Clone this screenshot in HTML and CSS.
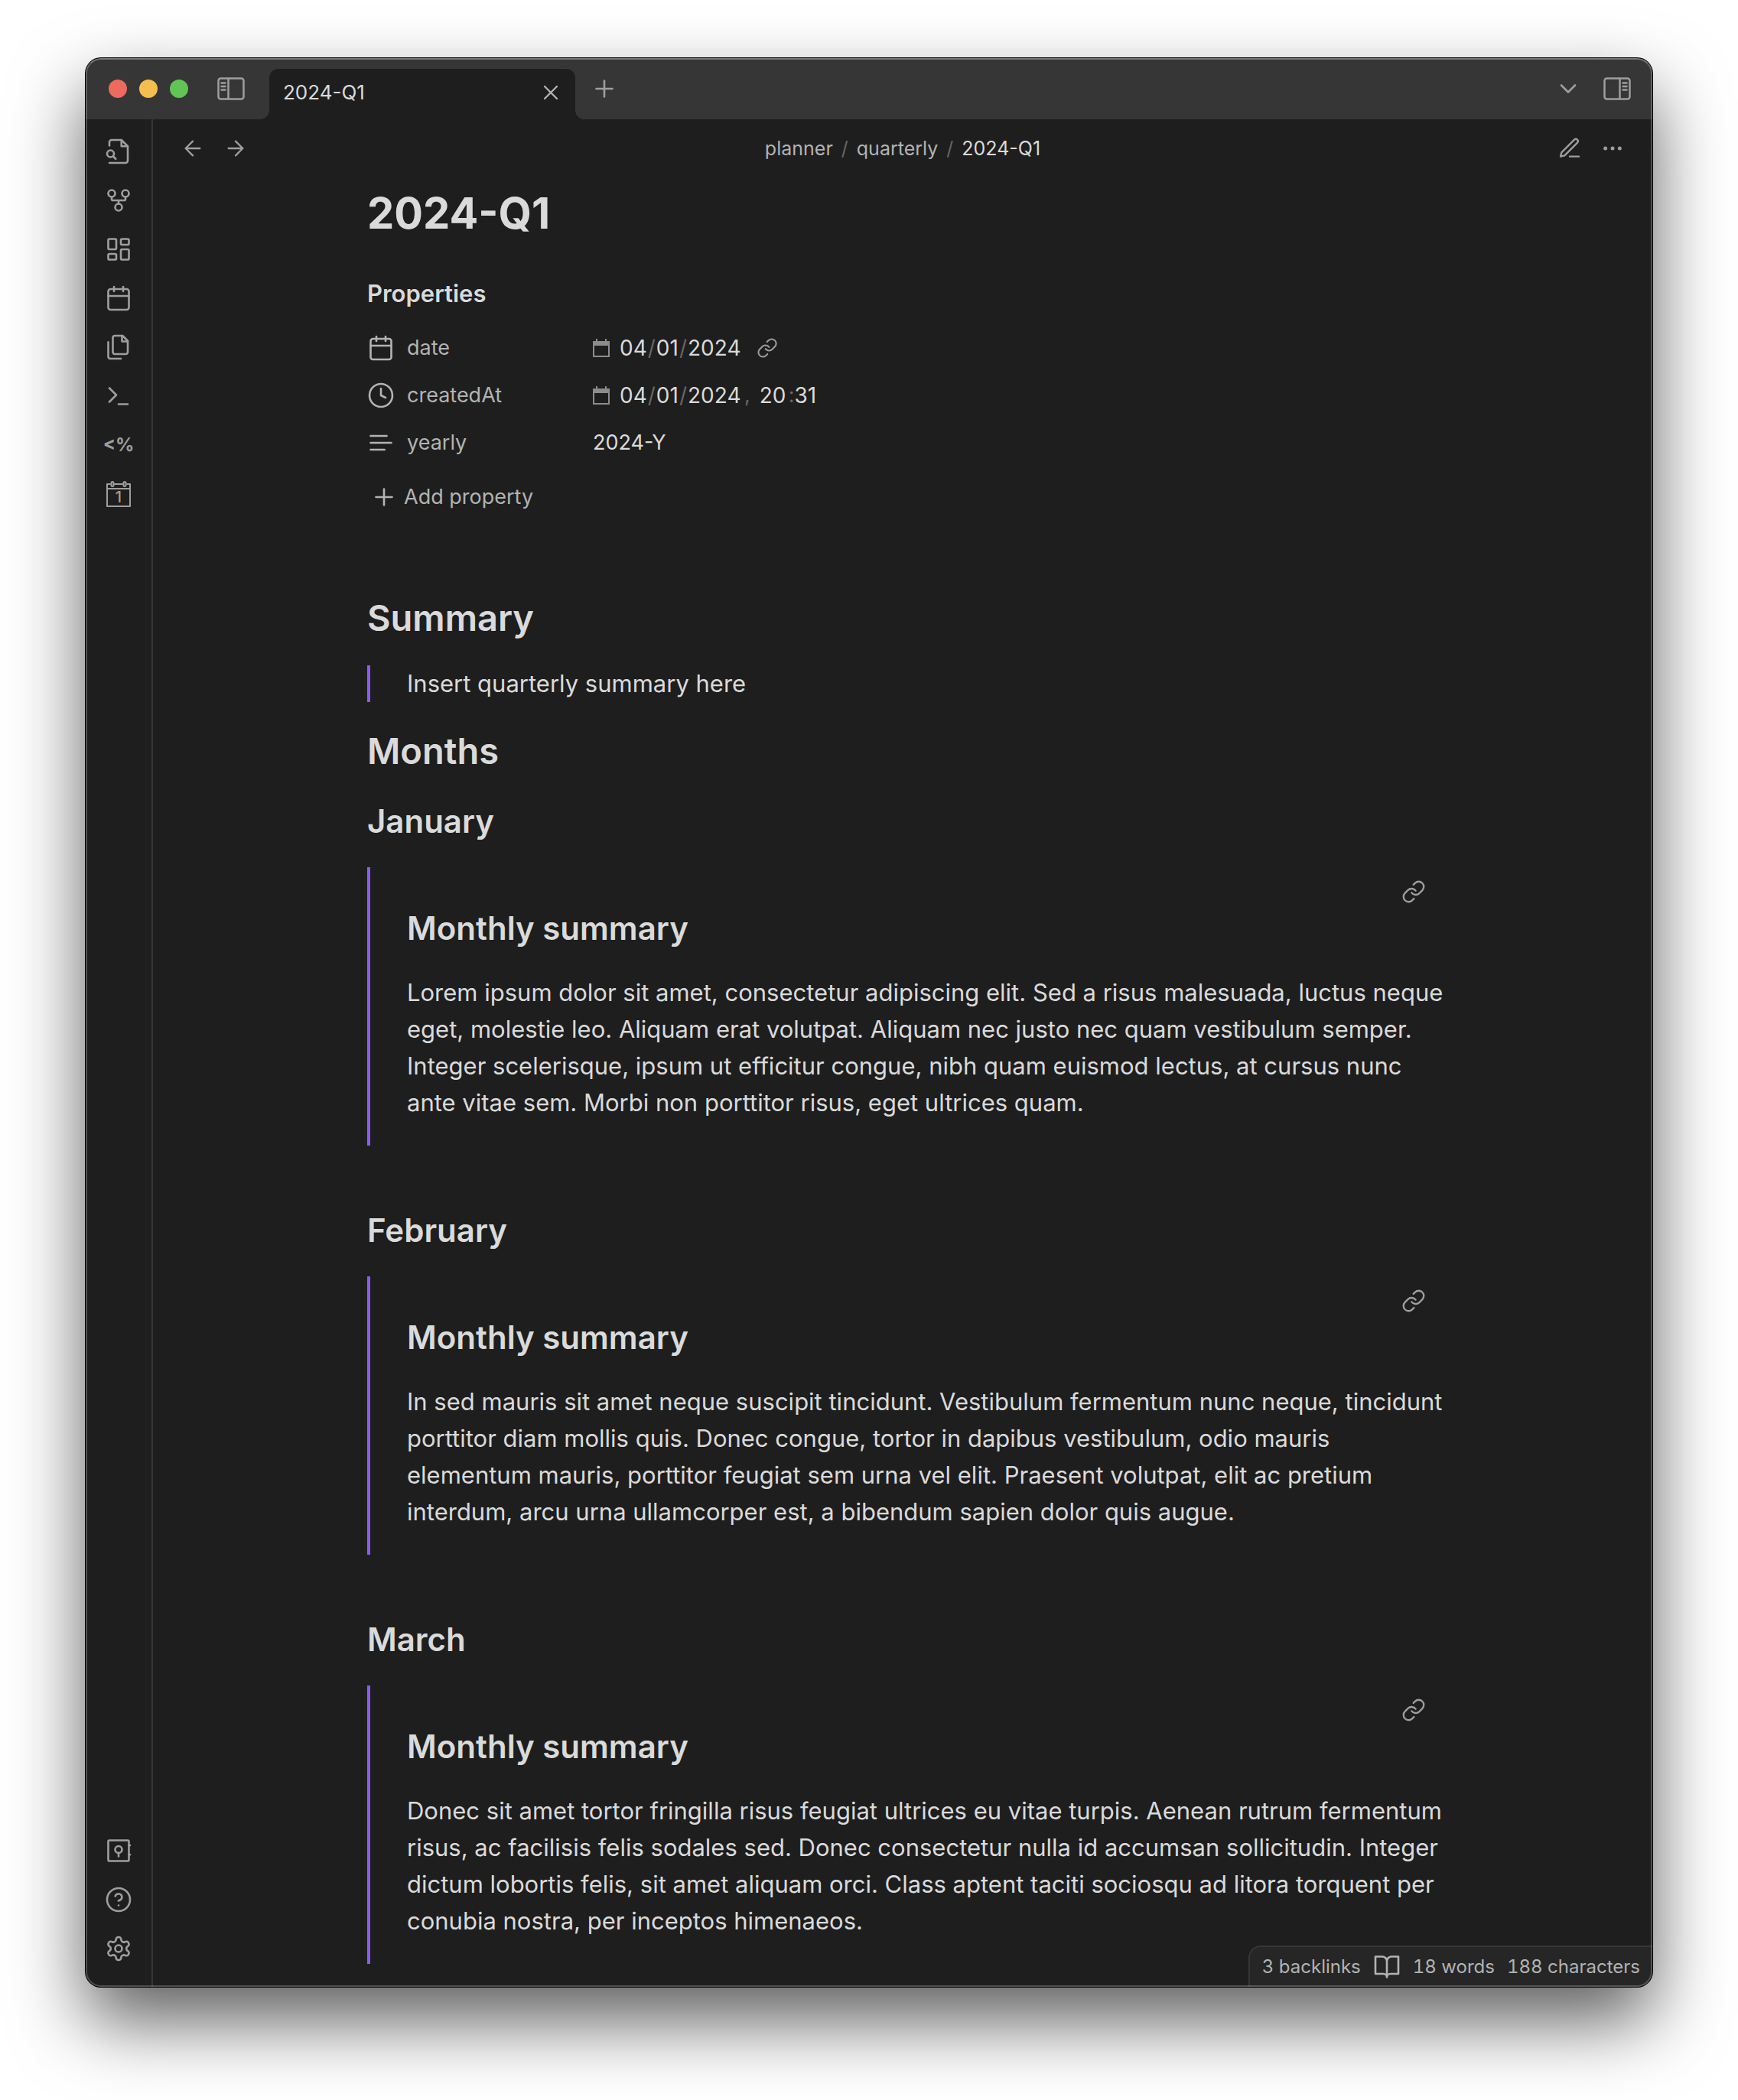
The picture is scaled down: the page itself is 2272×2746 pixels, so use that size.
FILE: index.html
```html
<!DOCTYPE html>
<html lang="en">
<head>
<meta charset="utf-8">
<meta name="viewport" content="width=device-width, initial-scale=1">
<title>2024-Q1</title>
<link rel="stylesheet" href="styles.css">
</head>
<body>
<svg class="sprite" aria-hidden="true">
  <symbol id="link" viewBox="0 0 24 24"><path d="M10 13a5 5 0 0 0 7.54.54l3-3a5 5 0 0 0-7.07-7.07l-1.72 1.71"/><path d="M14 11a5 5 0 0 0-7.54-.54l-3 3a5 5 0 0 0 7.07 7.07l1.71-1.71"/></symbol>
  <symbol id="calendar" viewBox="0 0 24 24"><rect x="3" y="4" width="18" height="18" rx="2"/><path d="M16 2v4M8 2v4M3 10h18"/></symbol>
  <symbol id="plus" viewBox="0 0 24 24"><path d="M5 12h14M12 5v14"/></symbol>
  <symbol id="picker" viewBox="0 0 22 24"><path d="M1 4h20v19H1z" fill="none" stroke-width="2"/><path d="M0 3h22v6H0z" fill="currentColor" stroke="none"/><path d="M5 0v4M17 0v4" stroke-width="2" stroke-linecap="butt"/></symbol>
</svg>
<div class="window">
  <header class="titlebar">
    <div class="lights"><span class="light close"></span><span class="light minimize"></span><span class="light zoom"></span></div>
    <button class="icon-button panel-left" aria-label="Toggle left sidebar"><svg class="panel" viewBox="0 0 36 30"><rect x="1.5" y="1.5" width="33" height="27" rx="3"/><path d="M14.5 2v26M5.5 7.5h5M5.5 12h5M5.5 16.5h5"/></svg></button>
    <div class="tab"><span class="tab-title">2024-Q1</span><button class="icon-button tab-close" aria-label="Close tab"><svg class="icon s32" viewBox="0 0 24 24"><path d="M18 6 6 18M6 6l12 12"/></svg></button></div>
    <button class="icon-button new-tab" aria-label="New tab"><svg class="icon s36"><use href="#plus"/></svg></button>
    <button class="icon-button tab-list" aria-label="Tab list"><svg class="icon s36" viewBox="0 0 24 24"><path d="m6 9 6 6 6-6"/></svg></button>
    <button class="icon-button panel-right" aria-label="Toggle right sidebar"><svg class="panel" viewBox="0 0 36 30"><rect x="1.5" y="1.5" width="33" height="27" rx="3"/><path d="M21.5 2v26M25.5 7.5h5M25.5 12h5M25.5 16.5h5"/></svg></button>
  </header>
  <div class="body">
    <nav class="ribbon">
      <button class="icon-button" aria-label="Quick switcher"><svg class="icon s36" viewBox="0 0 24 24"><path d="M14.5 2v5.5H20"/><path d="M4 7V4a2 2 0 0 1 2-2h8.5L20 7.5V20a2 2 0 0 1-2 2H4"/><circle cx="5" cy="14" r="3"/><path d="m9.5 18.5-2.3-2.3"/></svg></button>
      <button class="icon-button" aria-label="Graph view"><svg class="icon s36" viewBox="0 0 24 24"><circle cx="12" cy="18" r="3"/><circle cx="6" cy="6" r="3"/><circle cx="18" cy="6" r="3"/><path d="M18 9v2a1 1 0 0 1-1 1H7a1 1 0 0 1-1-1V9M12 12v3"/></svg></button>
      <button class="icon-button" aria-label="New canvas"><svg class="icon s36" viewBox="0 0 24 24"><rect x="3" y="3" width="7" height="9" rx="1"/><rect x="14" y="3" width="7" height="5" rx="1"/><rect x="14" y="12" width="7" height="9" rx="1"/><rect x="3" y="16" width="7" height="5" rx="1"/></svg></button>
      <button class="icon-button" aria-label="Daily note"><svg class="icon s36"><use href="#calendar"/></svg></button>
      <button class="icon-button" aria-label="Insert template"><svg class="icon s36" viewBox="0 0 24 24"><path d="M15.5 2H8.6c-.4 0-.8.2-1.1.5-.3.3-.5.7-.5 1.1v12.8c0 .4.2.8.5 1.1.3.3.7.5 1.1.5h9.8c.4 0 .8-.2 1.1-.5.3-.3.5-.7.5-1.1V6.5L15.5 2z"/><path d="M3 7.6v12.8c0 .4.2.8.5 1.1.3.3.7.5 1.1.5H14"/><path d="M15 2v5h5"/></svg></button>
      <button class="icon-button" aria-label="Command palette"><svg class="icon s36" viewBox="0 0 24 24"><path d="m4 17 6-6-6-6M12 19h8"/></svg></button>
      <button class="icon-button templater" aria-label="Templater">&lt;%</button>
      <button class="icon-button" aria-label="Open today"><svg class="icon s36" viewBox="0 0 36 36"><g stroke-width="2"><path d="M7 5H3v29h30V5h-4M12 5h12M3 11h30"/><rect x="8.5" y="2" width="3" height="6" rx="1.5"/><rect x="24.5" y="2" width="3" height="6" rx="1.5"/></g><text class="day" x="18" y="29" text-anchor="middle">1</text></svg></button>
      <button class="icon-button vault" aria-label="Open another vault"><svg class="icon s36" viewBox="0 0 24 24"><rect x="3" y="3" width="18" height="18" rx="1"/><circle cx="12" cy="11" r="3"/><path d="M12 14v3M21 7.3h1M21 15.5h1"/></svg></button>
      <button class="icon-button" aria-label="Help"><svg class="icon s36" viewBox="0 0 24 24"><circle cx="12" cy="12" r="10"/><path d="M9.09 9a3 3 0 0 1 5.83 1c0 2-3 3-3 3M12 17h.01"/></svg></button>
      <button class="icon-button" aria-label="Settings"><svg class="icon s36" viewBox="0 0 24 24"><path d="M12.22 2h-.44a2 2 0 0 0-2 2v.18a2 2 0 0 1-1 1.73l-.43.25a2 2 0 0 1-2 0l-.15-.08a2 2 0 0 0-2.73.73l-.22.38a2 2 0 0 0 .73 2.73l.15.1a2 2 0 0 1 1 1.72v.51a2 2 0 0 1-1 1.74l-.15.09a2 2 0 0 0-.73 2.73l.22.38a2 2 0 0 0 2.73.73l.15-.08a2 2 0 0 1 2 0l.43.25a2 2 0 0 1 1 1.73V20a2 2 0 0 0 2 2h.44a2 2 0 0 0 2-2v-.18a2 2 0 0 1 1-1.73l.43-.25a2 2 0 0 1 2 0l.15.08a2 2 0 0 0 2.73-.73l.22-.39a2 2 0 0 0-.73-2.73l-.15-.08a2 2 0 0 1-1-1.74v-.5a2 2 0 0 1 1-1.74l.15-.09a2 2 0 0 0 .73-2.73l-.22-.38a2 2 0 0 0-2.73-.73l-.15.08a2 2 0 0 1-2 0l-.43-.25a2 2 0 0 1-1-1.73V4a2 2 0 0 0-2-2z"/><circle cx="12" cy="12" r="3"/></svg></button>
    </nav>
    <div class="pane">
      <div class="view-header">
        <div class="actions">
          <button class="icon-button" aria-label="Back"><svg class="icon s32" viewBox="0 0 24 24"><path d="m12 19-7-7 7-7M19 12H5"/></svg></button>
          <button class="icon-button" aria-label="Forward"><svg class="icon s32" viewBox="0 0 24 24"><path d="M5 12h14M12 5l7 7-7 7"/></svg></button>
        </div>
        <nav class="breadcrumb" aria-label="Path"><a href="#planner">planner</a><span class="faint">/</span><a href="#quarterly">quarterly</a><span class="faint">/</span><span class="current">2024-Q1</span></nav>
        <div class="actions">
          <button class="icon-button" aria-label="Edit"><svg class="icon s32" viewBox="0 0 24 24"><path d="M12 20h9M16.5 3.5a2.12 2.12 0 0 1 3 3L7 19l-4 1 1-4Z"/></svg></button>
          <button class="icon-button" aria-label="More options"><svg class="icon s32" viewBox="0 0 24 24"><circle cx="12" cy="12" r="1"/><circle cx="19" cy="12" r="1"/><circle cx="5" cy="12" r="1"/></svg></button>
        </div>
      </div>
      <main class="note">
        <h1 class="title">2024-Q1</h1>
        <section class="properties">
          <h2 class="properties-heading">Properties</h2>
          <div class="property">
            <label class="key" for="date"><svg class="icon s36"><use href="#calendar"/></svg>date</label>
            <div class="value"><svg class="picker"><use href="#picker"/></svg><input class="date" id="date" type="date" value="2024-04-01"><a class="value-link" href="#daily" aria-label="Open daily note"><svg class="icon s28"><use href="#link"/></svg></a></div>
          </div>
          <div class="property">
            <label class="key" for="created"><svg class="icon s36" viewBox="0 0 24 24"><circle cx="12" cy="12" r="10"/><path d="M12 6v6l4 2"/></svg>createdAt</label>
            <div class="value"><svg class="picker"><use href="#picker"/></svg><input class="date" id="created" type="date" value="2024-04-01"><span class="faint comma">,</span><input class="segment" aria-label="Hour" value="20"><span class="faint">:</span><input class="segment" aria-label="Minute" value="31"></div>
          </div>
          <div class="property">
            <label class="key" for="yearly"><svg class="icon s36" viewBox="0 0 24 24"><path d="M17 6H3M21 12H3M15.1 18H3"/></svg>yearly</label>
            <div class="value"><input class="text" id="yearly" value="2024-Y"></div>
          </div>
          <button class="add"><svg class="icon s36"><use href="#plus"/></svg>Add property</button>
        </section>
        <h2 class="heading">Summary</h2>
        <blockquote class="quote">Insert quarterly summary here</blockquote>
        <h2 class="heading">Months</h2>
        <h3 class="month">January</h3>
        <article class="embed">
          <a class="embed-link" href="#january" aria-label="Open link"><svg class="icon s32"><use href="#link"/></svg></a>
          <h3 class="embed-heading">Monthly summary</h3>
          <p class="embed-text">Lorem ipsum dolor sit amet, consectetur adipiscing elit. Sed a risus malesuada, luctus neque eget, molestie leo. Aliquam erat volutpat. Aliquam nec justo nec quam vestibulum semper. Integer scelerisque, ipsum ut efficitur congue, nibh quam euismod lectus, at cursus nunc ante vitae sem. Morbi non porttitor risus, eget ultrices quam.</p>
        </article>
        <h3 class="month">February</h3>
        <article class="embed">
          <a class="embed-link" href="#february" aria-label="Open link"><svg class="icon s32"><use href="#link"/></svg></a>
          <h3 class="embed-heading">Monthly summary</h3>
          <p class="embed-text">In sed mauris sit amet neque suscipit tincidunt. Vestibulum fermentum nunc neque, tincidunt porttitor diam mollis quis. Donec congue, tortor in dapibus vestibulum, odio mauris elementum mauris, porttitor feugiat sem urna vel elit. Praesent volutpat, elit ac pretium interdum, arcu urna ullamcorper est, a bibendum sapien dolor quis augue.</p>
        </article>
        <h3 class="month">March</h3>
        <article class="embed">
          <a class="embed-link" href="#march" aria-label="Open link"><svg class="icon s32"><use href="#link"/></svg></a>
          <h3 class="embed-heading">Monthly summary</h3>
          <p class="embed-text">Donec sit amet tortor fringilla risus feugiat ultrices eu vitae turpis. Aenean rutrum fermentum risus, ac facilisis felis sodales sed. Donec consectetur nulla id accumsan sollicitudin. Integer dictum lobortis felis, sit amet aliquam orci. Class aptent taciti sociosqu ad litora torquent per conubia nostra, per inceptos himenaeos.</p>
        </article>
      </main>
    </div>
  </div>
  <footer class="status"><span>3 backlinks</span><svg class="icon s36" viewBox="0 0 24 24"><path d="M2 3h6a4 4 0 0 1 4 4v14a3 3 0 0 0-3-3H2zM22 3h-6a4 4 0 0 0-4 4v14a3 3 0 0 1 3-3h7z"/></svg><span>18 words</span><span>188 characters</span></footer>
</div>
</body>
</html>
```
FILE: styles.css
```css
:root {
  --bg: #1e1e1e;
  --bar: #363636;
  --text: #dadada;
  --muted: #b3b3b3;
  --icon: #9e9e9e;
  --faint: #666;
  --accent: #8a5cf5;
}
* { box-sizing: border-box; margin: 0; padding: 0; }
body {
  display: flex;
  min-height: 100vh;
  padding: 76px 112px 148px;
  background: #fff;
  color: var(--text);
  font: 400 31px/48px Inter, "Liberation Sans", sans-serif;
}
button, input { font: inherit; color: inherit; background: none; border: 0; outline: 0; }
a { color: inherit; text-decoration: none; }
.sprite { display: none; }
.window {
  position: relative;
  display: flex;
  flex: 1;
  flex-direction: column;
  min-width: 0;
  overflow: hidden;
  border-radius: 20px;
  background: var(--bg);
  box-shadow: 0 0 0 1px #000, 0 44px 96px rgba(0, 0, 0, .64);
}
.window::after {
  content: "";
  position: absolute;
  inset: 0;
  border: 2px solid rgba(255, 255, 255, .22);
  border-top-color: rgba(255, 255, 255, .32);
  border-radius: 20px;
  pointer-events: none;
}
.icon, .panel { flex: none; fill: none; stroke: currentColor; stroke-linecap: round; stroke-linejoin: round; }
.icon { stroke-width: 1.75; }
.panel { width: 36px; height: 30px; stroke-width: 2.5; }
.s28 { width: 28px; height: 28px; }
.s32 { width: 32px; height: 32px; }
.s36 { width: 36px; height: 36px; }
.icon-button { display: flex; flex: none; align-items: center; justify-content: center; width: 52px; height: 52px; color: var(--icon); }

.titlebar { display: flex; align-items: center; height: 80px; padding: 0 20px 0 30px; background: var(--bar); }
.lights { display: flex; gap: 16px; }
.light { width: 24px; height: 24px; border-radius: 50%; }
.close { background: #ed6a5e; }
.minimize { background: #f5bf4f; }
.zoom { background: #61c554; }
.panel-left { margin-left: 30px; }
.tab {
  position: relative;
  display: flex;
  align-items: center;
  align-self: flex-end;
  justify-content: space-between;
  width: 400px;
  height: 66px;
  margin-left: 24px;
  padding: 0 6px 4px 18px;
  border-radius: 12px 12px 0 0;
  background: var(--bg);
  font-size: 26px;
}
.tab::before, .tab::after { content: ""; position: absolute; bottom: 0; width: 12px; height: 12px; }
.tab::before { right: 100%; background: radial-gradient(circle at 0 0, var(--bar) 12px, var(--bg) 12px); }
.tab::after { left: 100%; background: radial-gradient(circle at 100% 0, var(--bar) 12px, var(--bg) 12px); }
.tab-close { color: var(--muted); }
.new-tab { margin-left: 12px; }
.tab-list { margin-left: auto; margin-right: 12px; }

.body { display: flex; flex: 1; }
.ribbon { display: flex; flex-direction: column; gap: 12px; width: 88px; padding: 16px 17px 24px; border-right: 2px solid var(--bar); }
.vault { margin-top: auto; }
.templater { font-size: 24px; font-weight: 700; }
.day { fill: currentColor; stroke: none; font-size: 20px; font-weight: 500; }
.pane { flex: 1; min-width: 0; }
.view-header { display: flex; align-items: center; justify-content: space-between; height: 76px; padding: 0 26px; }
.actions { display: flex; gap: 4px; }
.breadcrumb { display: flex; gap: 11px; color: var(--muted); font-size: 25px; }
.current { color: var(--text); }
.faint { color: var(--faint); }

.note { max-width: 1400px; margin: 0 auto; padding-bottom: 24px; }
.title { padding-top: 12px; font-size: 56px; font-weight: 700; line-height: 70px; }
.properties { margin-top: 46px; }
.properties-heading { margin-bottom: 16px; font-size: 31px; font-weight: 600; line-height: 48px; }
.property { display: flex; height: 62px; align-items: center; font-size: 27px; }
.key { display: flex; gap: 16px; align-items: center; width: 295px; color: var(--muted); }
.value { display: flex; align-items: center; }
.picker { width: 22px; height: 24px; margin-right: 12px; color: #8c8c8c; stroke: currentColor; }
.date { width: 164px; overflow: hidden; font-size: 28px; }
.date::-webkit-calendar-picker-indicator { display: none; }
.date::-webkit-datetime-edit-text { color: var(--faint); }
.value-link { display: flex; margin-left: 16px; color: var(--icon); }
.comma { margin-right: 12px; }
.segment { width: 38px; font-size: 28px; }
.text { width: 400px; }
.add { display: flex; align-items: center; gap: 8px; height: 62px; margin-top: 9px; padding-left: 4px; color: var(--muted); font-size: 27px; }
.heading { font-size: 47px; font-weight: 600; line-height: 60px; }
.properties + .heading { margin-top: 97px; }
.quote { margin: 32px 0 34px; padding-left: 48px; border-left: 4px solid var(--accent); }
.month { margin-top: 34px; font-size: 42px; font-weight: 600; line-height: 56px; }
.embed { position: relative; margin: 32px 0 83px; padding: 52px 0 32px 48px; border-left: 4px solid var(--accent); }
.embed:last-child { margin-bottom: 0; }
.embed-heading { margin-bottom: 32px; font-size: 42px; font-weight: 600; line-height: 56px; }
.embed-text { margin-right: -16px; }
.embed-link { position: absolute; top: 16px; right: 16px; display: flex; color: var(--icon); }

.status {
  position: absolute;
  right: 0;
  bottom: 0;
  display: flex;
  align-items: center;
  gap: 16px;
  height: 54px;
  padding: 0 16px;
  border: 2px solid var(--bar);
  border-width: 2px 0 0 2px;
  border-radius: 16px 0 0 0;
  background: #262626;
  color: var(--muted);
  font-size: 24px;
  font-variant-numeric: tabular-nums;
}
```
